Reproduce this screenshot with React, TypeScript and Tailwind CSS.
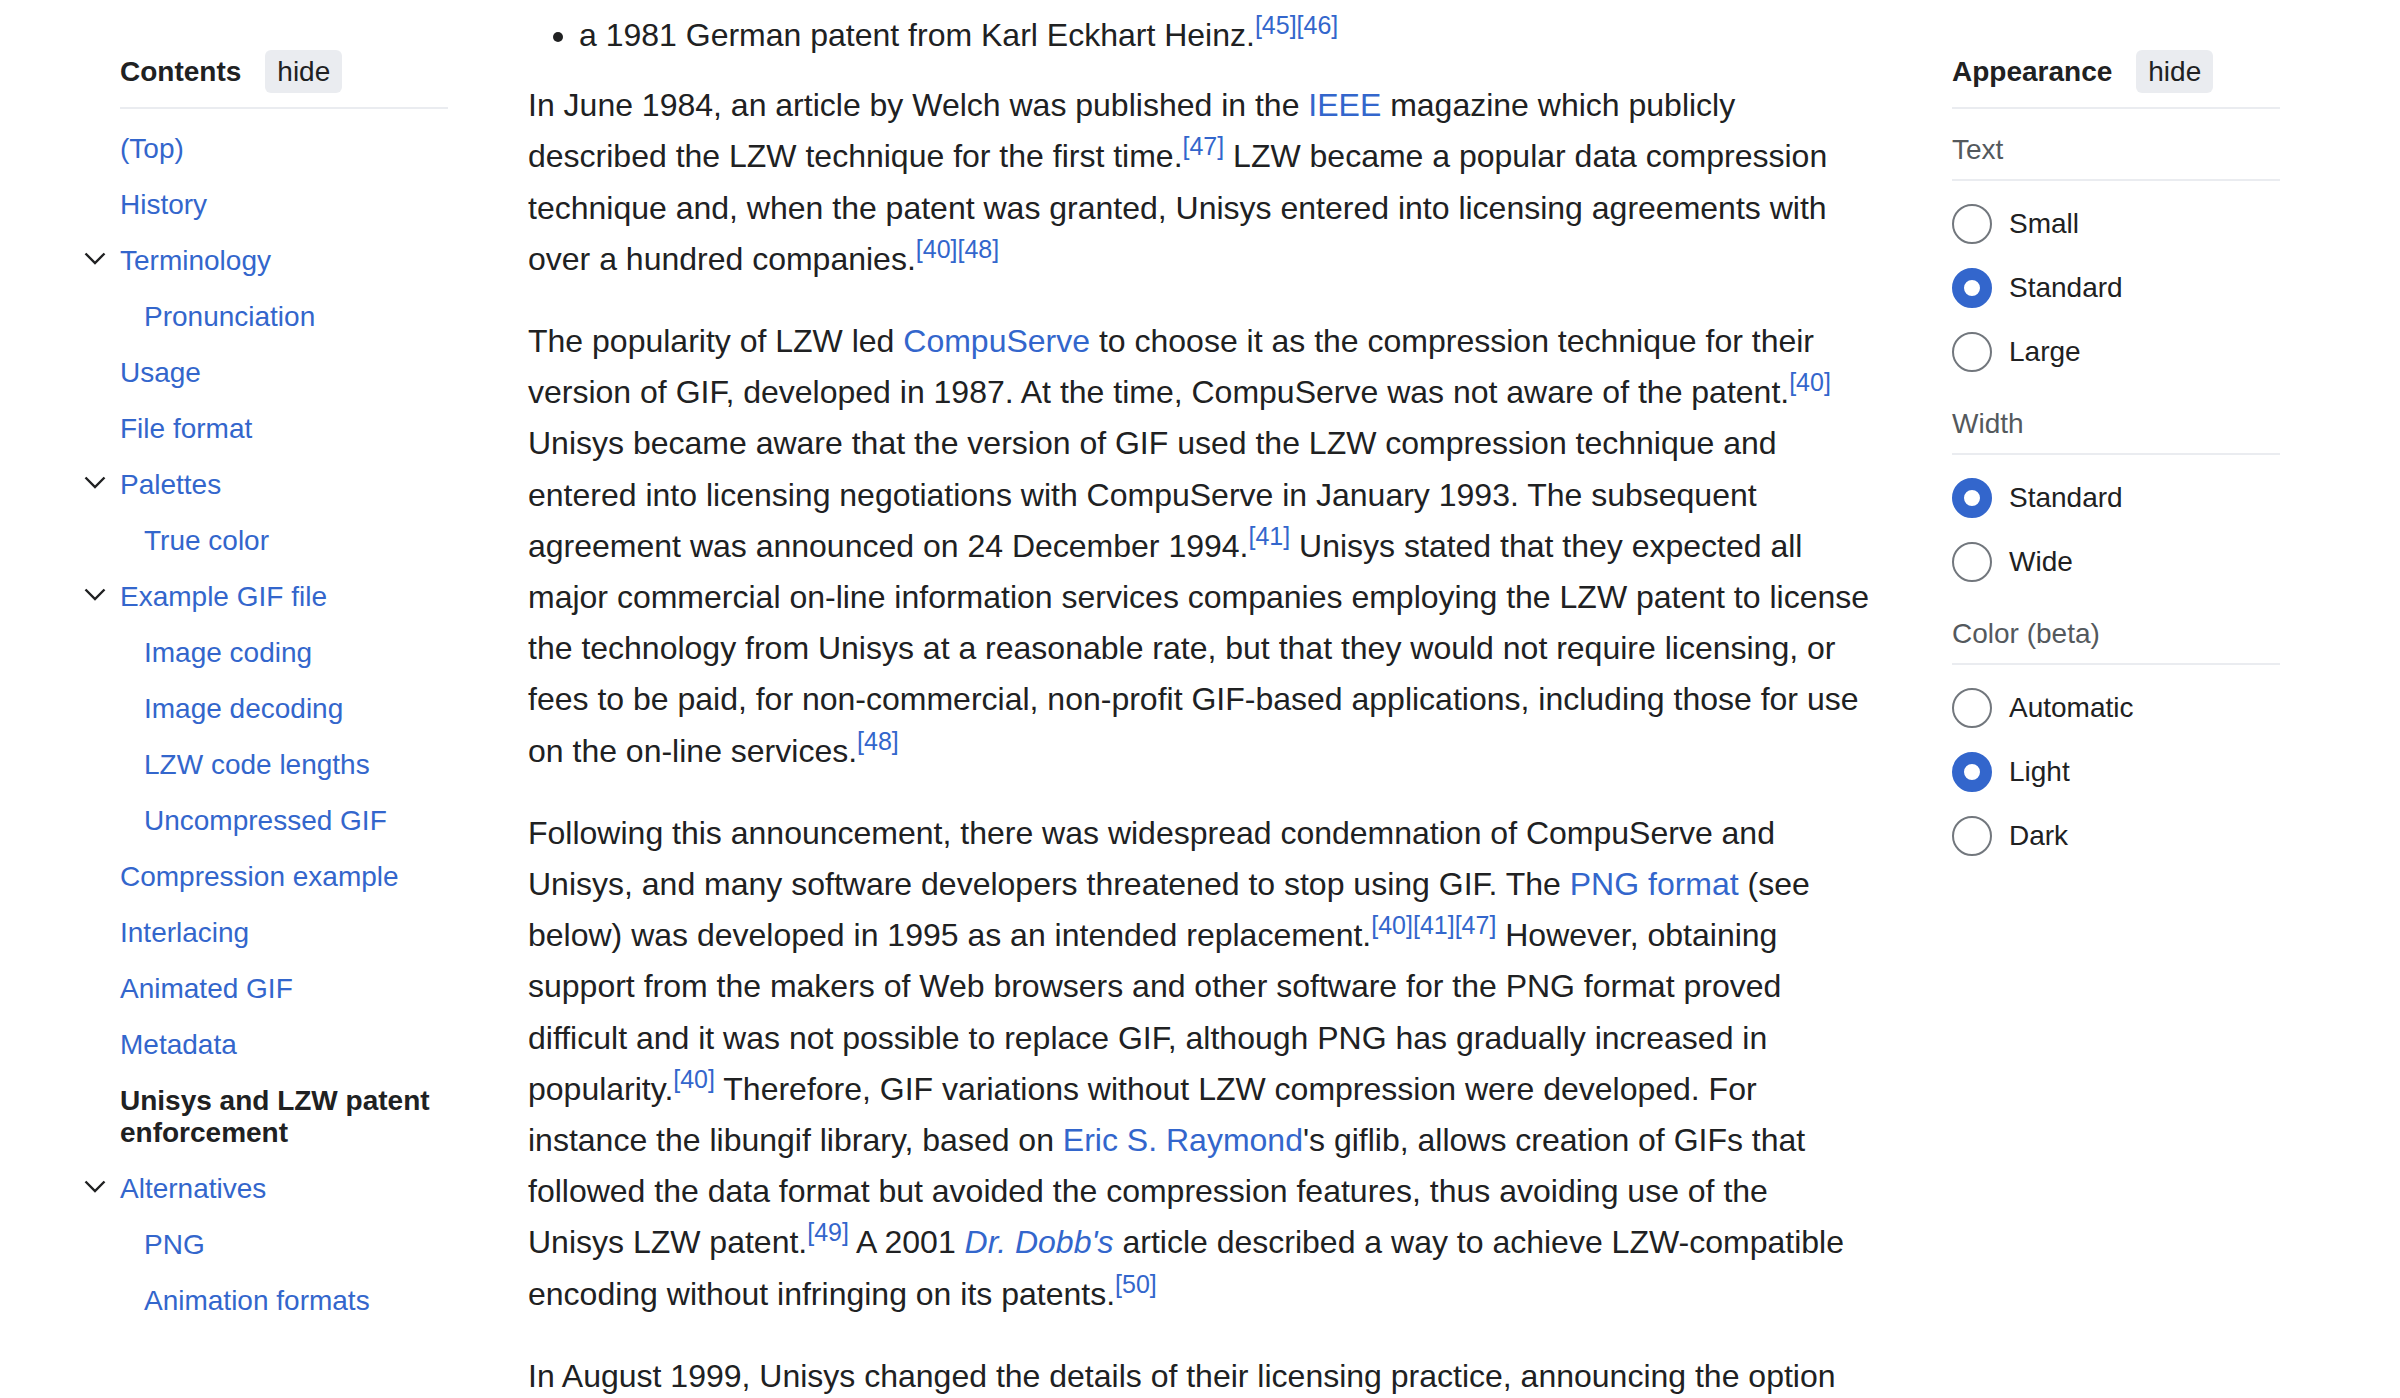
import React from "react";

type TocItem = { label: string; level: 1 | 2; chevron?: boolean; active?: boolean };

const toc: TocItem[] = [
  { label: "(Top)", level: 1 },
  { label: "History", level: 1 },
  { label: "Terminology", level: 1, chevron: true },
  { label: "Pronunciation", level: 2 },
  { label: "Usage", level: 1 },
  { label: "File format", level: 1 },
  { label: "Palettes", level: 1, chevron: true },
  { label: "True color", level: 2 },
  { label: "Example GIF file", level: 1, chevron: true },
  { label: "Image coding", level: 2 },
  { label: "Image decoding", level: 2 },
  { label: "LZW code lengths", level: 2 },
  { label: "Uncompressed GIF", level: 2 },
  { label: "Compression example", level: 1 },
  { label: "Interlacing", level: 1 },
  { label: "Animated GIF", level: 1 },
  { label: "Metadata", level: 1 },
  { label: "Unisys and LZW patent enforcement", level: 1, active: true },
  { label: "Alternatives", level: 1, chevron: true },
  { label: "PNG", level: 2 },
  { label: "Animation formats", level: 2 },
];

const Chevron = () => (
  <svg width="22" height="14" viewBox="0 0 22 14" className="-mt-[4px]">
    <polyline points="1.5,1.5 11,11 20.5,1.5" fill="none" stroke="#202122" strokeWidth="2.4" />
  </svg>
);

// reference marks: plain span so preflight's sup offset doesn't stack on top
const Ref = ({ n }: { n: string }) => (
  <span className="text-[25px] leading-none align-super text-[#3366cc]">{n}</span>
);

const A = ({ children }: { children: React.ReactNode }) => <span className="text-[#3366cc]">{children}</span>;

const PanelHeader = ({ title }: { title: string }) => (
  <div className="flex items-center gap-[24px] h-[43px] mt-[50px] box-content pb-[14px] border-b-2 border-[#eaecf0]">
    <span className="text-[28px] font-bold text-[#202122]">{title}</span>
    <button className="h-[43px] px-[12px] rounded-[6px] bg-[#eaecf0] text-[28px] text-[#202122] leading-none">hide</button>
  </div>
);

const Radio = ({ label, checked }: { label: string; checked?: boolean }) => (
  <div className="flex items-center h-[64px] gap-[17px]">
    <span
      className={
        checked
          ? "w-[40px] h-[40px] rounded-full border-[12px] border-[#3366cc] bg-white"
          : "w-[40px] h-[40px] rounded-full border-2 border-[#72777d] bg-white"
      }
    />
    <span className="text-[28px] text-[#202122]">{label}</span>
  </div>
);

const Section = ({ title, options, first }: { title: string; options: [string, boolean][]; first?: boolean }) => (
  <div className={first ? "mt-[18.5px]" : "mt-[18px]"}>
    <div className="text-[28px] leading-[44px] text-[#54595d] pb-[7px] border-b-2 border-[#eaecf0]">{title}</div>
    <div className="mt-[11px]">
      {options.map(([l, c]) => (
        <Radio key={l} label={l} checked={c} />
      ))}
    </div>
  </div>
);

export default function App() {
  return (
    <div className="h-[1398px] overflow-hidden bg-white font-['Liberation_Sans',Arial,sans-serif] text-[#202122]">
      <div className="flex pl-[120px]">
        {/* contents */}
        <aside className="w-[328px] shrink-0">
          <PanelHeader title="Contents" />
          <ul className="mt-[12px]">
            {toc.map((t) => (
              <li key={t.label} className={"flex items-center py-[12px] " + (t.level === 2 ? "pl-[24px]" : "")}>
                {t.chevron && (
                  <span className="-ml-[36px] w-[36px] flex items-center">
                    <Chevron />
                  </span>
                )}
                <span
                  className={
                    "text-[28px] leading-[32px] " + (t.active ? "font-bold text-[#202122]" : "text-[#3366cc]")
                  }
                >
                  {t.label}
                </span>
              </li>
            ))}
          </ul>
        </aside>

        {/* article */}
        <main className="w-[1343px] shrink-0 ml-[80px] pt-[10px] text-[32px] leading-[51.2px]">
          <ul className="list-disc pl-[51px] mb-[19px]">
            <li>
              a 1981 German patent from Karl Eckhart Heinz.<Ref n="[45]" />
              <Ref n="[46]" />
            </li>
          </ul>
          <p className="mb-[31px]">
            In June 1984, an article by Welch was published in the <A>IEEE</A> magazine which publicly described the
            LZW technique for the first time.<Ref n="[47]" /> LZW became a popular data compression technique and, when
            the patent was granted, Unisys entered into licensing agreements with over a hundred companies.
            <Ref n="[40]" />
            <Ref n="[48]" />
          </p>
          <p className="mb-[31px]">
            The popularity of LZW led <A>CompuServe</A> to choose it as the compression technique for their version of
            GIF, developed in 1987. At the time, CompuServe was not aware of the patent.<Ref n="[40]" /> Unisys became
            aware that the version of GIF used the LZW compression technique and entered into licensing negotiations
            with CompuServe in January 1993. The subsequent agreement was announced on 24 December 1994.
            <Ref n="[41]" /> Unisys stated that they expected all major commercial on-line information services
            companies employing the LZW patent to license the technology from Unisys at a reasonable rate, but that
            they would not require licensing, or fees to be paid, for non-commercial, non-profit GIF-based
            applications, including those for use on the on-line services.<Ref n="[48]" />
          </p>
          <p className="mb-[31px]">
            Following this announcement, there was widespread condemnation of CompuServe and Unisys, and many software
            developers threatened to stop using GIF. The <A>PNG format</A> (see below) was developed in 1995 as an
            intended replacement.<Ref n="[40]" />
            <Ref n="[41]" />
            <Ref n="[47]" /> However, obtaining support from the makers of Web browsers and other software for the PNG
            format proved difficult and it was not possible to replace GIF, although PNG has gradually increased in
            popularity.<Ref n="[40]" /> Therefore, GIF variations without LZW compression were developed. For instance
            the libungif library, based on <A>Eric S. Raymond</A>'s giflib, allows creation of GIFs that followed the
            data format but avoided the compression features, thus avoiding use of the Unisys LZW patent.
            <Ref n="[49]" /> A 2001 <span className="italic text-[#3366cc]">Dr. Dobb's</span> article described a way to
            achieve LZW-compatible encoding without infringing on its patents.<Ref n="[50]" />
          </p>
          <p className="mb-[31px]">
            In August 1999, Unisys changed the details of their licensing practice, announcing the option for owners
            of certain non-commercial and private websites to obtain licenses on payment of a one-time license fee of
            $5000 or $7500.
          </p>
        </main>

        {/* appearance */}
        <aside className="w-[328px] shrink-0 ml-[81px]">
          <PanelHeader title="Appearance" />
          <Section
            first
            title="Text"
            options={[
              ["Small", false],
              ["Standard", true],
              ["Large", false],
            ]}
          />
          <Section
            title="Width"
            options={[
              ["Standard", true],
              ["Wide", false],
            ]}
          />
          <Section
            title="Color (beta)"
            options={[
              ["Automatic", false],
              ["Light", true],
              ["Dark", false],
            ]}
          />
        </aside>
      </div>
    </div>
  );
}
